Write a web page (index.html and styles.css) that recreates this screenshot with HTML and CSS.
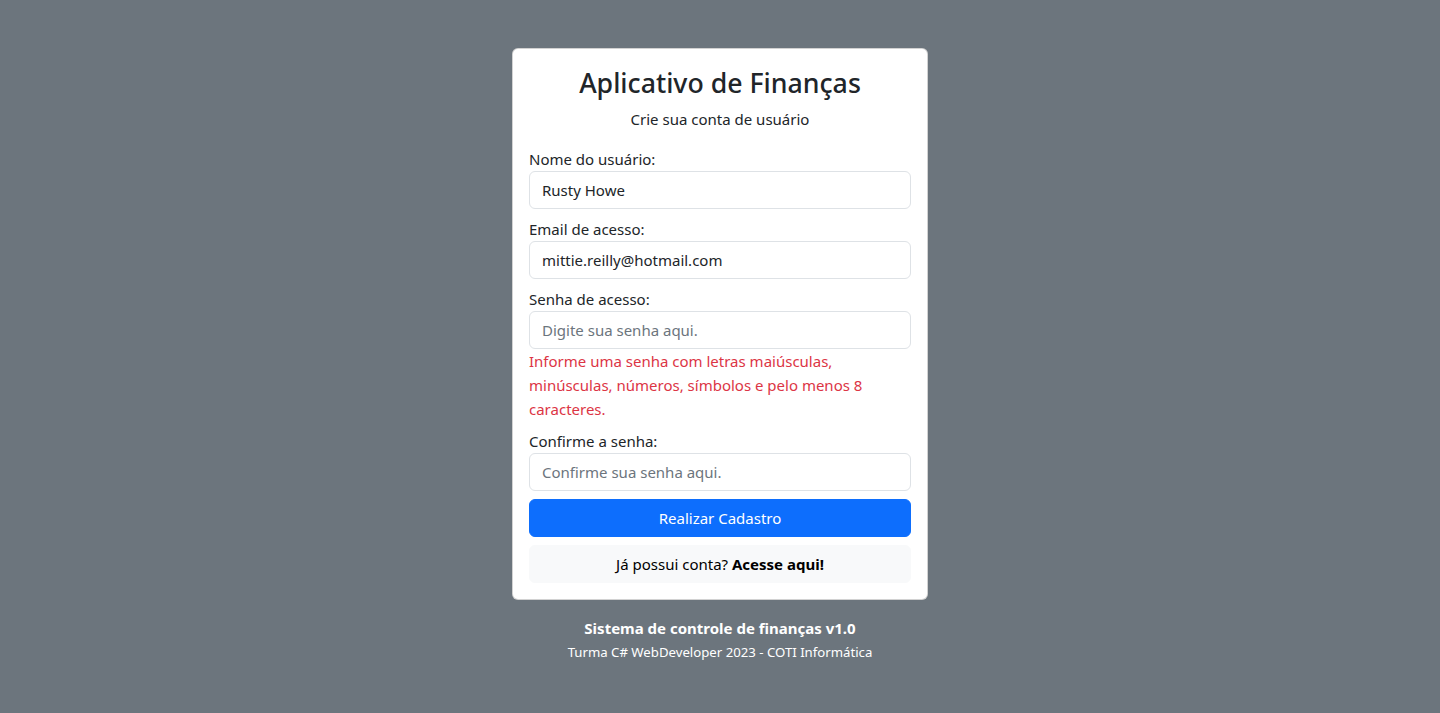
FILE: index.html
```html
<!DOCTYPE html>
<html lang="pt-br">
<head>
<meta charset="utf-8">
<title>Aplicativo de Finanças</title>
<link rel="stylesheet" href="styles.css">
</head>
<body>
<main class="page">
  <div class="card">
    <h3 class="title">Aplicativo de Finanças</h3>
    <p class="subtitle">Crie sua conta de usuário</p>
    <form class="form">
      <label class="label">Nome do usuário:</label>
      <input class="input" type="text" value="Rusty Howe">
      <label class="label">Email de acesso:</label>
      <input class="input" type="text" value="mittie.reilly@hotmail.com">
      <label class="label">Senha de acesso:</label>
      <input class="input input-tight" type="password" placeholder="Digite sua senha aqui.">
      <div class="error">Informe uma senha com letras maiúsculas, minúsculas, números, símbolos e pelo menos 8 caracteres.</div>
      <label class="label">Confirme a senha:</label>
      <input class="input" type="password" placeholder="Confirme sua senha aqui.">
      <button class="btn btn-primary" type="button">Realizar Cadastro</button>
      <div class="btn btn-light">Já possui conta? <a class="link" href="#">Acesse aqui!</a></div>
    </form>
  </div>
  <footer class="footer">
    <p class="footer-title">Sistema de controle de finanças v1.0</p>
    <p class="footer-sub">Turma C# WebDeveloper 2023 - COTI Informática</p>
  </footer>
</main>
</body>
</html>
```
FILE: styles.css
```css
* { box-sizing: border-box; }
html, body { margin: 0; height: 100%; }
body {
  background: #6c757d;
  font-family: "Noto Sans", "Open Sans", sans-serif;
  font-size: 15px;
  line-height: 24px;
  color: #212529;
}
.page {
  display: flex;
  flex-direction: column;
  align-items: center;
  padding-top: 48px;
}
.card {
  width: 416px;
  background: #fff;
  border: 1px solid rgba(0,0,0,0.175);
  border-radius: 6px;
  padding: 16px;
  display: flex;
  flex-direction: column;
}
.title {
  margin: 0 0 8px;
  font-size: 26.7px;
  font-weight: 500;
  line-height: 33.6px;
  text-align: center;
  padding-top: 1px;
  margin-bottom: 7px;
}
.subtitle {
  margin: 0 0 16px;
  text-align: center;
}
.form { display: flex; flex-direction: column; }
.label { display: block; }
.input {
  display: block;
  width: 100%;
  height: 38px;
  padding: 6px 12px;
  margin-bottom: 8px;
  font: inherit;
  color: #212529;
  background: #fff;
  border: 1px solid #dee2e6;
  border-radius: 6px;
  outline: none;
}
.input::placeholder { color: #6c757d; opacity: 1; }
.input-tight { margin-bottom: 0; }
.error {
  color: #dc3545;
  margin-bottom: 8px;
}
.btn {
  display: block;
  width: 100%;
  height: 38px;
  padding: 6px 12px;
  font: inherit;
  text-align: center;
  border-radius: 6px;
  border: 1px solid transparent;
}
.btn-primary {
  background: #0d6efd;
  border-color: #0d6efd;
  color: #fff;
  margin-bottom: 8px;
}
.btn-light {
  background: #f8f9fa;
  border-color: #f8f9fa;
  color: #000;
}
.link { color: #000; font-weight: 700; text-decoration: none; }
.footer {
  margin-top: 16px;
  text-align: center;
  color: #fff;
}
.footer-title { margin: 0; font-weight: 700; }
.footer-sub { margin: 0; font-size: 13.2px; }
```
